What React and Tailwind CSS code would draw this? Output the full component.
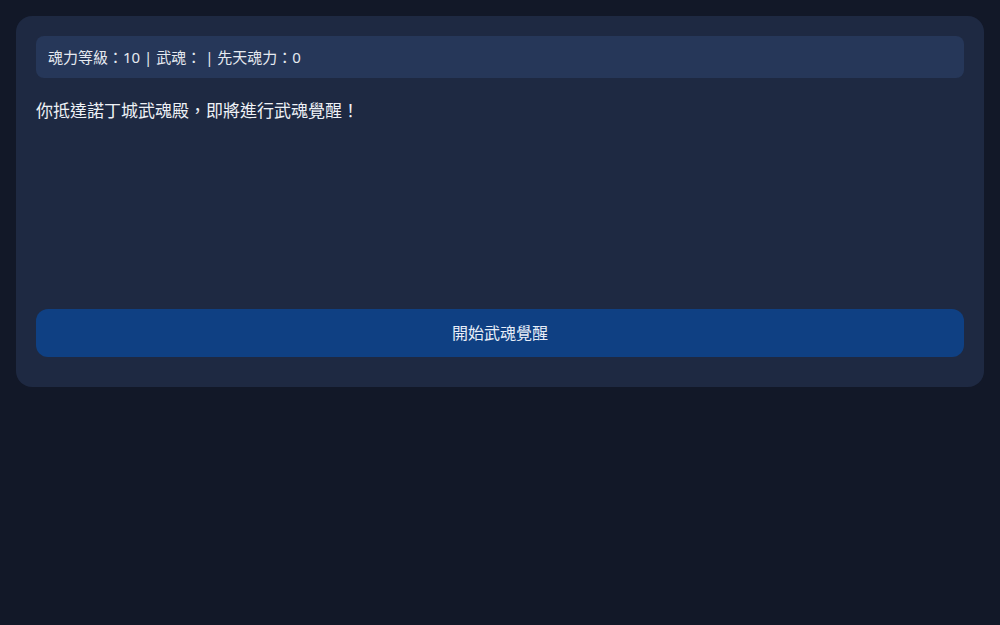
export default function App() {
  return (
    <div
      className="min-h-[625px] w-full bg-[#121828] p-4 text-white"
      style={{ fontFamily: '"Noto Sans", "Noto Sans CJK TC", sans-serif' }}
    >
      <div className="rounded-2xl bg-[#1e2942] px-5 pt-5 pb-[30px]">
        <div className="flex h-[42px] items-center rounded-lg bg-[#263759] px-3 text-[15px] text-[#e5e9f0]">
          魂力等級：10 | 武魂： | 先天魂力：0
        </div>
        <div className="h-[231px] pt-[20px] text-[17px] text-[#eef1f6]">
          你抵達諾丁城武魂殿，即將進行武魂覺醒！
        </div>
        <button className="flex h-12 w-full items-center justify-center rounded-xl bg-[#0f4083] text-base text-[#e8eef8]">
          開始武魂覺醒
        </button>
      </div>
    </div>
  );
}
